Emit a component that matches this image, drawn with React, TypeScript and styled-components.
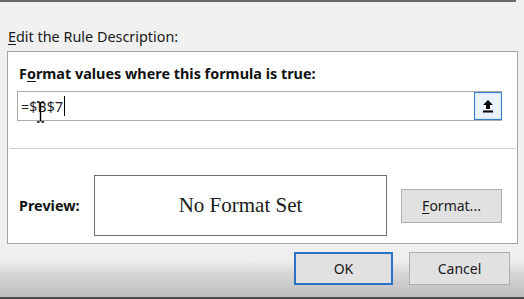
import React from "react";
import styled, { createGlobalStyle } from "styled-components";

const GlobalStyle = createGlobalStyle`
  html, body {
    margin: 0;
    padding: 0;
    background: #f0f0f0;
  }
  body {
    font-family: "Noto Sans", "Open Sans", sans-serif;
    color: #000;
  }
`;

const App = () => {
  return (
    <>
      <GlobalStyle />
      <Dialog>
        <PrevBox />
        <SectionLabel>
          <u>E</u>dit the Rule Description:
        </SectionLabel>

        <Panel>
          <Heading>
            F<u>o</u>rmat values where this formula is true:
          </Heading>

          <FormulaField>
            <FormulaText>
              =$B$7
              <Caret />
            </FormulaText>
            <CollapseButton aria-label="Collapse dialog">
              <svg width="12" height="14" viewBox="0 0 12 14">
                <path d="M6 1 L11 6 L8 6 L8 10 L4 10 L4 6 L1 6 Z" fill="#000" />
                <rect x="1" y="11.5" width="10" height="2" fill="#000" />
              </svg>
            </CollapseButton>
            <MouseBeam width="9" height="22" viewBox="0 0 9 22">
              <path d="M1 1 H3.5 M5.5 1 H8 M4.5 1.5 V20.5 M1 21 H3.5 M5.5 21 H8" stroke="#000" strokeWidth="1.4" fill="none" />
            </MouseBeam>
          </FormulaField>

          <Separator />

          <PreviewRow>
            <PreviewLabel>Preview:</PreviewLabel>
            <PreviewBox>No Format Set</PreviewBox>
            <DialogButton $width={101} $height={34}>
              <u>F</u>ormat...
            </DialogButton>
          </PreviewRow>
        </Panel>

        <Footer>
          <DialogButton $width={99} $height={33} $primary>
            OK
          </DialogButton>
          <DialogButton $width={101} $height={33}>
            Cancel
          </DialogButton>
        </Footer>
      </Dialog>
    </>
  );
};

export default App;

const Dialog = styled.div`
  width: 524px;
  height: 299px;
  overflow: hidden;
  display: flex;
  flex-direction: column;
`;

const PrevBox = styled.div`
  width: 514px;
  height: 0;
  border-bottom: 2px solid #6a6a6a;
  border-right: 2px solid #6a6a6a;
`;

const SectionLabel = styled.div`
  margin: 25px 0 0 8px;
  font-size: 14.4px;
  line-height: 20px;
  height: 22px;
  color: #1a1a1a;

  u {
    text-decoration-thickness: 1px;
    text-underline-offset: 2px;
  }
`;

const Panel = styled.div`
  margin: 2px 0 0 7px;
  width: 509px;
  height: 191px;
  background: #fff;
  border: 1px solid #a3a3a3;
  display: flex;
  flex-direction: column;
`;

const Heading = styled.div`
  margin: 12px 0 0 11px;
  font-size: 14.4px;
  font-weight: 700;
  line-height: 20px;
  color: #111;

  u {
    text-decoration-thickness: 1px;
    text-underline-offset: 2px;
  }
`;

const FormulaField = styled.div`
  position: relative;
  margin: 7px 0 0 9px;
  width: 483px;
  height: 28px;
  border: 1px solid #a9a9a9;
  display: flex;
  align-items: center;
  justify-content: space-between;
`;

const FormulaText = styled.div`
  display: flex;
  align-items: center;
  padding-left: 3px;
  font-size: 14px;
  color: #222;
  letter-spacing: 0.2px;
`;

const Caret = styled.span`
  display: inline-block;
  width: 1px;
  height: 20px;
  margin-left: 1px;
  background: #000;
`;

const MouseBeam = styled.svg`
  position: absolute;
  left: 18px;
  top: 9px;
`;

const CollapseButton = styled.button`
  width: 28px;
  height: 28px;
  margin-right: -1px;
  padding: 0;
  display: flex;
  align-items: center;
  justify-content: center;
  background: #eaf3fc;
  border: 1px solid #3c7fcf;
  box-shadow: inset 0 0 0 1px #d6e7f8;
`;

const Separator = styled.div`
  margin: 27px 0 0 2px;
  width: 506px;
  height: 1px;
  background: #cdcdcd;
`;

const PreviewRow = styled.div`
  display: flex;
  align-items: center;
  margin-top: 26px;
  padding-left: 11px;
`;

const PreviewLabel = styled.div`
  width: 75px;
  font-size: 14.4px;
  font-weight: 700;
  color: #111;
`;

const PreviewBox = styled.div`
  width: 291px;
  height: 59px;
  border: 1px solid #6f6f6f;
  display: flex;
  align-items: center;
  justify-content: center;
  font-family: "Liberation Serif", "DejaVu Serif", serif;
  font-size: 21px;
  color: #1c1c1c;
  margin-right: 14px;
`;

const DialogButton = styled.button<{ $width: number; $height: number; $primary?: boolean }>`
  width: ${(p) => p.$width}px;
  height: ${(p) => p.$height}px;
  padding: 0;
  font-family: "Noto Sans", "Open Sans", sans-serif;
  font-size: 14px;
  color: #1a1a1a;
  background: #e1e1e1;
  border: ${(p) => (p.$primary ? "2px solid #2b73c8" : "1px solid #adadad")};

  u {
    text-decoration-thickness: 1px;
    text-underline-offset: 2px;
  }
`;

const Footer = styled.div`
  flex: 1;
  display: flex;
  justify-content: flex-end;
  gap: 16px;
  padding: 8px 14px 0 0;
  border-bottom: 2px solid #4a4a4a;
  background: linear-gradient(
    to bottom,
    #f0f0f0 0px,
    #eeeeee 16px,
    #d6d6d6 30px,
    #bdbdbd 53px
  );
`;
